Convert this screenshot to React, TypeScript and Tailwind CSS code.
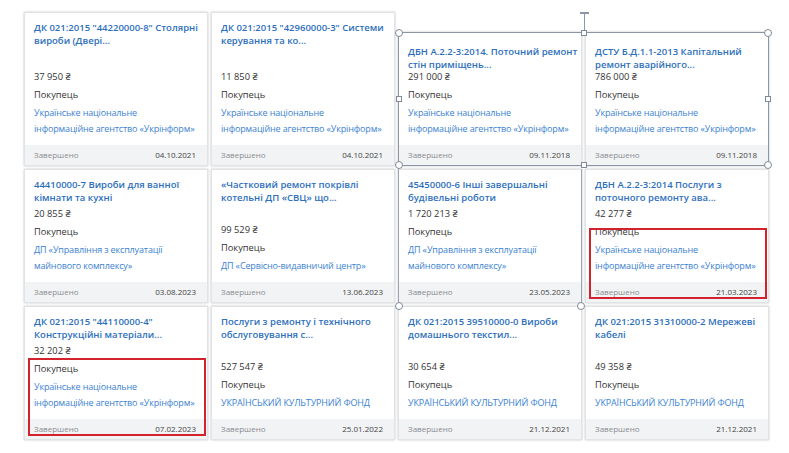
type Card = {
  title: string[];
  price: string;
  org: string[];
  date: string;
  lift?: boolean;
  mark?: number;
};

const UKRINFORM = ["Українське національне", "інформаційне агентство «Укрінформ»"];
const DP_UEMK = ["ДП «Управління з експлуатації", "майнового комплексу»"];
const UCF = ["УКРАЇНСЬКИЙ КУЛЬТУРНИЙ ФОНД"];

const cards: Card[] = [
  { title: ["ДК 021:2015 \"44220000-8\" Столярні", "вироби (Двері..."], price: "37 950 ₴", org: UKRINFORM, date: "04.10.2021" },
  { title: ["ДК 021:2015 \"42960000-3\" Системи", "керування та ко..."], price: "11 850 ₴", org: UKRINFORM, date: "04.10.2021" },
  { title: ["ДБН А.2.2-3:2014. Поточний ремонт", "стін приміщень..."], price: "291 000 ₴", org: UKRINFORM, date: "09.11.2018", lift: true },
  { title: ["ДСТУ Б.Д.1.1-2013 Капітальний", "ремонт аварійного..."], price: "786 000 ₴", org: UKRINFORM, date: "09.11.2018", lift: true },
  { title: ["44410000-7 Вироби для ванної", "кімнати та кухні"], price: "20 855 ₴", org: DP_UEMK, date: "03.08.2023" },
  { title: ["«Частковий ремонт покрівлі", "котельні ДП «СВЦ» що..."], price: "99 529 ₴", org: ["ДП «Сервісно-видавничий центр»"], date: "13.06.2023" },
  { title: ["45450000-6 Інші завершальні", "будівельні роботи"], price: "1 720 213 ₴", org: DP_UEMK, date: "23.05.2023" },
  { title: ["ДБН А.2.2-3:2014 Послуги з", "поточного ремонту ава..."], price: "42 277 ₴", org: UKRINFORM, date: "21.03.2023", mark: 58 },
  { title: ["ДК 021:2015 \"44110000-4\"", "Конструкційні матеріали..."], price: "32 202 ₴", org: UKRINFORM, date: "07.02.2023", mark: 51 },
  { title: ["Послуги з ремонту і технічного", "обслуговування с..."], price: "527 547 ₴", org: UCF, date: "25.01.2022" },
  { title: ["ДК 021:2015 39510000-0 Вироби", "домашнього текстил..."], price: "30 654 ₴", org: UCF, date: "21.12.2021" },
  { title: ["ДК 021:2015 31310000-2 Мережеві", "кабелі"], price: "49 358 ₴", org: UCF, date: "21.12.2021" },
];

function TenderCard({ c }: { c: Card }) {
  return (
    <div
      className={`relative flex flex-col bg-white border border-[#e1e4e7] shadow-[0_0_2px_rgba(0,0,0,0.25)] ${c.lift ? "mt-[20px]" : ""}`}
    >
      <div
        className={`px-[9px] text-[9.5px] leading-[13px] font-semibold text-[#2d6fbd] whitespace-nowrap ${c.lift ? "pt-[12px] -mb-[4px]" : "pt-[8px]"}`}
      >
        {c.title.map((t) => (
          <div key={t}>{t}</div>
        ))}
      </div>
      <div className="mt-auto px-[9px] text-[9.3px] text-[#333] whitespace-nowrap">
        <div className="leading-[19px]">{c.price}</div>
        <div className="leading-[18px]">Покупець</div>
        <div className="mt-[1px] leading-[16px] text-[9px] tracking-[-0.15px] text-[#3b82d2]">
          {c.org.map((o) => (
            <div key={o}>{o}</div>
          ))}
        </div>
      </div>
      <div className="mt-[8px] h-[20px] flex items-center justify-between pl-[9px] pr-[11px] bg-[#f2f3f5] text-[8px]">
        <span className="text-[#8a8d91]">Завершено</span>
        <span className="text-[#444]">{c.date}</span>
      </div>
      {c.mark !== undefined && (
        <div
          className="absolute left-[3px] right-[1px] bottom-[3px] border-2 border-[#d3222c] pointer-events-none"
          style={{ top: c.mark }}
        />
      )}
    </div>
  );
}

function Circle({ className }: { className: string }) {
  return <div className={`absolute w-[8px] h-[8px] -ml-[4px] -mt-[4px] rounded-full bg-white border-[1.5px] border-[#7f8b98] ${className}`} />;
}

function Square({ className }: { className: string }) {
  return <div className={`absolute w-[6px] h-[6px] -ml-[3px] -mt-[3px] bg-white border-[1.5px] border-[#7f8b98] ${className}`} />;
}

export default function App() {
  return (
    <div className="w-[789px] h-[453px] bg-white overflow-hidden pt-[12px] pl-[24px]" style={{ fontFamily: '"Open Sans", "Noto Sans", sans-serif' }}>
      <div className="relative grid grid-cols-[repeat(4,184px)] gap-[3px]">
        {cards.map((c, i) => (
          <TenderCard key={i} c={c} />
        ))}

        {/* selection frame over the two lifted cards */}
        <div className="absolute left-[374px] top-[20px] w-[371px] h-[134px] border-[1.5px] border-[#8a96a3] pointer-events-none">
          <div className="absolute left-1/2 -top-[21px] h-[20px] w-[1.5px] bg-[#8a96a3]" />
          <div className="absolute left-1/2 -ml-[4px] -top-[21px] w-[9px] h-[1.5px] bg-[#8a96a3]" />
          <Circle className="left-0 top-0" />
          <Square className="left-1/2 top-0" />
          <Circle className="left-full top-0" />
          <Square className="left-0 top-1/2" />
          <Square className="left-full top-1/2" />
          <Circle className="left-0 top-full" />
          <Square className="left-1/2 top-full" />
          <Circle className="left-full top-full" />
        </div>

        <div className="absolute left-[374px] top-[157px] w-[184px] h-[137px] border-x-[1.5px] border-[#9aa5b1] pointer-events-none">
          <Circle className="left-0 top-full" />
          <Circle className="left-full top-full" />
        </div>
      </div>
    </div>
  );
}
